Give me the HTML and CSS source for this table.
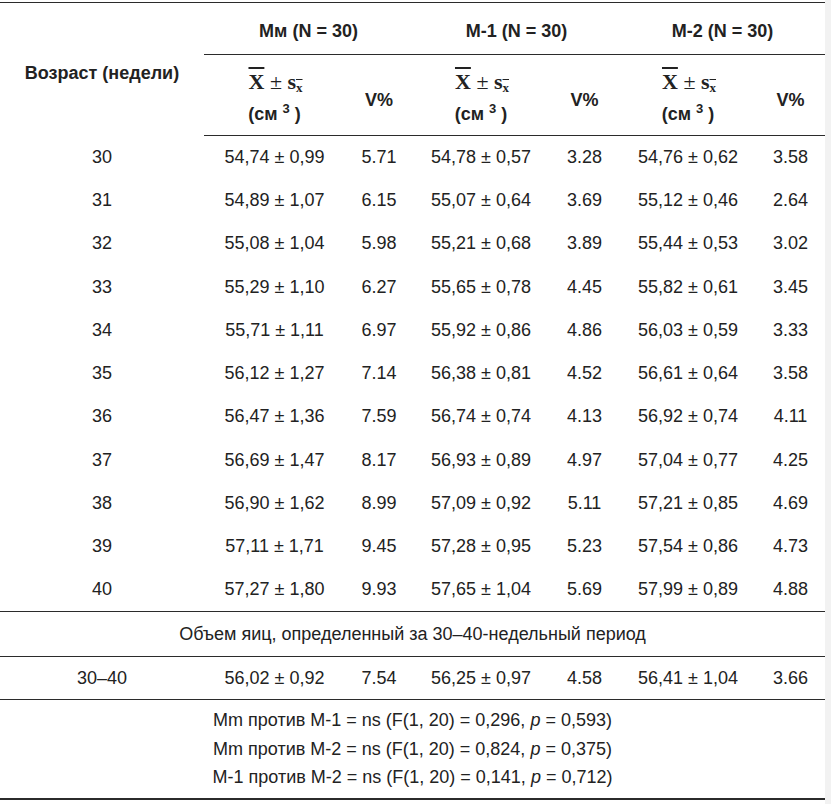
FILE: index.html
```html
<!DOCTYPE html>
<html lang="ru">
<head>
<meta charset="utf-8">
<title>Таблица</title>
<link rel="stylesheet" href="styles.css">
</head>
<body>
<div class="page">
<table class="data">
  <colgroup>
    <col class="c-age"><col class="c-m1"><col class="c-v1"><col class="c-m2"><col class="c-v2"><col class="c-m3"><col class="c-v3">
  </colgroup>
  <thead>
    <tr class="grp">
      <th rowspan="2" class="age-h"><div class="nudge-age">Возраст (недели)</div></th>
      <th colspan="2" class="g"><div class="nudge-g">Мм (N = 30)</div></th>
      <th colspan="2" class="g"><div class="nudge-g">M-1 (N = 30)</div></th>
      <th colspan="2" class="g"><div class="nudge-g">M-2 (N = 30)</div></th>
    </tr>
    <tr class="sub">
      <th class="mean-h"><div class="mean-box"><div class="math"><span class="ov">X</span> <span class="pm">±</span> s<sub><span class="ovs">x</span></sub></div><div class="unit">(см <sup>3</sup> )</div></div></th>
      <th class="v-h"><div class="nudge-v">V%</div></th>
      <th class="mean-h"><div class="mean-box"><div class="math"><span class="ov">X</span> <span class="pm">±</span> s<sub><span class="ovs">x</span></sub></div><div class="unit">(см <sup>3</sup> )</div></div></th>
      <th class="v-h"><div class="nudge-v">V%</div></th>
      <th class="mean-h"><div class="mean-box"><div class="math"><span class="ov">X</span> <span class="pm">±</span> s<sub><span class="ovs">x</span></sub></div><div class="unit">(см <sup>3</sup> )</div></div></th>
      <th class="v-h"><div class="nudge-v">V%</div></th>
    </tr>
  </thead>
  <tbody class="rows">
    <tr><td>30</td><td>54,74 ± 0,99</td><td>5.71</td><td>54,78 ± 0,57</td><td>3.28</td><td>54,76 ± 0,62</td><td>3.58</td></tr>
    <tr><td>31</td><td>54,89 ± 1,07</td><td>6.15</td><td>55,07 ± 0,64</td><td>3.69</td><td>55,12 ± 0,46</td><td>2.64</td></tr>
    <tr><td>32</td><td>55,08 ± 1,04</td><td>5.98</td><td>55,21 ± 0,68</td><td>3.89</td><td>55,44 ± 0,53</td><td>3.02</td></tr>
    <tr><td>33</td><td>55,29 ± 1,10</td><td>6.27</td><td>55,65 ± 0,78</td><td>4.45</td><td>55,82 ± 0,61</td><td>3.45</td></tr>
    <tr><td>34</td><td>55,71 ± 1,11</td><td>6.97</td><td>55,92 ± 0,86</td><td>4.86</td><td>56,03 ± 0,59</td><td>3.33</td></tr>
    <tr><td>35</td><td>56,12 ± 1,27</td><td>7.14</td><td>56,38 ± 0,81</td><td>4.52</td><td>56,61 ± 0,64</td><td>3.58</td></tr>
    <tr><td>36</td><td>56,47 ± 1,36</td><td>7.59</td><td>56,74 ± 0,74</td><td>4.13</td><td>56,92 ± 0,74</td><td>4.11</td></tr>
    <tr><td>37</td><td>56,69 ± 1,47</td><td>8.17</td><td>56,93 ± 0,89</td><td>4.97</td><td>57,04 ± 0,77</td><td>4.25</td></tr>
    <tr><td>38</td><td>56,90 ± 1,62</td><td>8.99</td><td>57,09 ± 0,92</td><td>5.11</td><td>57,21 ± 0,85</td><td>4.69</td></tr>
    <tr><td>39</td><td>57,11 ± 1,71</td><td>9.45</td><td>57,28 ± 0,95</td><td>5.23</td><td>57,54 ± 0,86</td><td>4.73</td></tr>
    <tr><td>40</td><td>57,27 ± 1,80</td><td>9.93</td><td>57,65 ± 1,04</td><td>5.69</td><td>57,99 ± 0,89</td><td>4.88</td></tr>
  </tbody>
  <tbody class="summary">
    <tr class="caption-row"><td colspan="7">Объем яиц, определенный за 30–40-недельный период</td></tr>
    <tr class="total-row"><td>30–40</td><td>56,02 ± 0,92</td><td>7.54</td><td>56,25 ± 0,97</td><td>4.58</td><td>56,41 ± 1,04</td><td>3.66</td></tr>
    <tr class="notes-row"><td colspan="7">
      <div>Mm против M-1 = ns (F(1, 20) = 0,296, <i>p</i> = 0,593)</div>
      <div>Mm против M-2 = ns (F(1, 20) = 0,824, <i>p</i> = 0,375)</div>
      <div>M-1 против M-2 = ns (F(1, 20) = 0,141, <i>p</i> = 0,712)</div>
    </td></tr>
  </tbody>
</table>
</div>
</body>
</html>
```

FILE: styles.css
```css
html {
  background: #f2f2f2;
}
body {
  margin: 0;
  font-family: "Liberation Sans", Arial, sans-serif;
  font-size: 18px;
  color: #222;
}
.page {
  width: 825px;
  height: 804px;
  background: #fff;
  padding-top: 2px;
  box-sizing: border-box;
}
.data {
  width: 825px;
  border-collapse: collapse;
  table-layout: fixed;
  border-top: 1px solid #2b2b2b;
  border-bottom: 2px solid #2b2b2b;
}
.c-age { width: 204px; }
.c-m1 { width: 141px; }
.c-v1 { width: 68px; }
.c-m2 { width: 136px; }
.c-v2 { width: 71px; }
.c-m3 { width: 136px; }
.c-v3 { width: 69px; }

th, td {
  text-align: center;
  font-weight: normal;
  padding: 0;
  vertical-align: middle;
}
th {
  font-weight: bold;
}
.grp {
  height: 52px;
}
.grp th.g {
  border-bottom: 1px solid #2b2b2b;
}
.nudge-g {
  padding-top: 5px;
}
.nudge-age {
  padding-top: 9px;
}
.sub {
  height: 81px;
}
.sub th {
  border-bottom: 1px solid #2b2b2b;
}
.nudge-v {
  padding-top: 11px;
}
.mean-box {
  padding-top: 8px;
}
.math {
  font-family: "Liberation Serif", "Times New Roman", serif;
  font-size: 22px;
  font-weight: bold;
  line-height: 24px;
  padding-left: 2px;
}
.ov {
  text-decoration: overline;
  text-decoration-thickness: 1.5px;
}
.pm {
  font-weight: normal;
}
.math sub {
  font-size: 13px;
  vertical-align: -3px;
  line-height: 0;
}
.ovs {
  text-decoration: overline;
}
.unit {
  line-height: 28px;
  margin-top: 6px;
}
.unit sup {
  font-size: 13px;
  vertical-align: 7px;
  line-height: 0;
}
.rows tr {
  height: 43.3px;
}
.rows tr:last-child td {
  border-bottom: 1px solid #2b2b2b;
}
.caption-row {
  height: 45px;
}
.caption-row td {
  border-bottom: 1px solid #2b2b2b;
}
.total-row {
  height: 43px;
}
.total-row td {
  border-bottom: 1px solid #2b2b2b;
}
.notes-row {
  height: 99px;
}
.notes-row td {
  line-height: 28.5px;
}
```
